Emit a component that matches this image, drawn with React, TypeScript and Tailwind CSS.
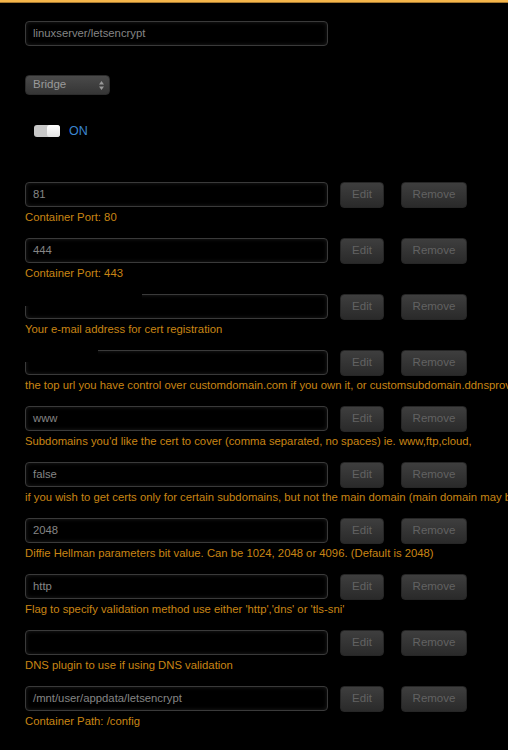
import React from "react";

type Row = { value: string; label: string; redact?: number };

const rows: Row[] = [
  { value: "81", label: "Container Port: 80" },
  { value: "444", label: "Container Port: 443" },
  { value: "", label: "Your e-mail address for cert registration", redact: 118 },
  {
    value: "",
    label:
      "the top url you have control over customdomain.com if you own it, or customsubdomain.ddnsprovider.com",
    redact: 74,
  },
  { value: "www", label: "Subdomains you'd like the cert to cover (comma separated, no spaces) ie. www,ftp,cloud," },
  {
    value: "false",
    label:
      "if you wish to get certs only for certain subdomains, but not the main domain (main domain may be hosted elsewhere)",
  },
  { value: "2048", label: "Diffie Hellman parameters bit value. Can be 1024, 2048 or 4096. (Default is 2048)" },
  { value: "http", label: "Flag to specify validation method use either 'http','dns' or 'tls-sni'" },
  { value: "", label: "DNS plugin to use if using DNS validation" },
  { value: "/mnt/user/appdata/letsencrypt", label: "Container Path: /config" },
];

function Field({ value, redact }: { value: string; redact?: number }) {
  return (
    <div className="relative h-[25px] w-[303px] shrink-0 rounded-[4px] border border-[#3a3a3a] bg-black px-[7px] text-[11.3px] leading-[23px] text-[#858585] shadow-[inset_0_0_4px_rgba(255,255,255,0.12)]">
      {value}
      {redact ? (
        <div
          className="absolute left-[-2px] top-[-2px] h-[13px] bg-black"
          style={{ width: redact }}
        />
      ) : null}
    </div>
  );
}

function Btn({ children, w }: { children: React.ReactNode; w: string }) {
  return (
    <div
      className={`${w} flex h-[26px] items-center justify-center rounded-[4px] border border-[#262626] bg-gradient-to-b from-[#3e3e3e] to-[#2a2a2a] text-[11.5px] text-[#626262]`}
    >
      {children}
    </div>
  );
}

export default function App() {
  return (
    <div
      className="min-h-[750px] w-[508px] overflow-hidden bg-black"
      style={{ fontFamily: '"Liberation Sans", Arial, sans-serif' }}
    >
      <div className="h-[2px] bg-[#f6b64a]" />
      <div className="h-[1px] bg-[#a87a30]" />
      <div className="pl-[25px] pt-[18px]">
        <Field value="linuxserver/letsencrypt" />

        <div className="mt-[29px] flex h-[20px] w-[85px] items-center justify-between rounded-[4px] border border-[#2c2c2c] bg-gradient-to-b from-[#4a4a4a] to-[#353535] pl-[7px] pr-[5px] text-[11.5px] text-[#9a9a9a]">
          <span>Bridge</span>
          <svg width="5" height="9" viewBox="0 0 5 9">
            <path d="M2.5 0 L5 3.5 L0 3.5 Z" fill="#9a9a9a" />
            <path d="M2.5 9 L5 5.5 L0 5.5 Z" fill="#9a9a9a" />
          </svg>
        </div>

        <div className="ml-[9px] mt-[27px] flex items-center gap-[9px]">
          <div className="flex h-[12px] w-[26px] items-center justify-end rounded-[3px] bg-[#c8c8c8]">
            <div className="h-[12px] w-[13px] rounded-[3px] bg-gradient-to-b from-[#ffffff] to-[#e4e4e4]" />
          </div>
          <span className="text-[12.5px] text-[#3b86cf]">ON</span>
        </div>

        <div className="mt-[41px] flex flex-col">
          {rows.map((r, i) => (
            <div key={i} className="mb-[5px] h-[51px]">
              <div className="flex items-center">
                <Field value={r.value} redact={r.redact} />
                <div className="ml-[12px]">
                  <Btn w="w-[44px]">Edit</Btn>
                </div>
                <div className="ml-[17px]">
                  <Btn w="w-[66px]">Remove</Btn>
                </div>
              </div>
              <div className="mt-[2px] whitespace-nowrap text-[11.3px] leading-[14px] text-[#c98514]">
                {r.label}
              </div>
            </div>
          ))}
        </div>
      </div>
    </div>
  );
}
